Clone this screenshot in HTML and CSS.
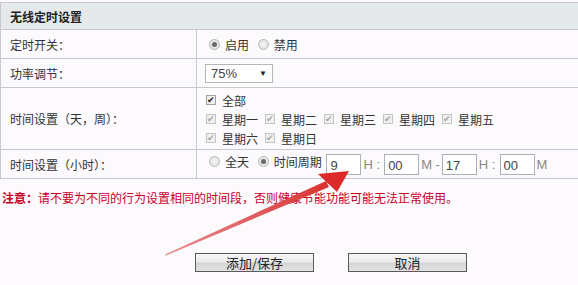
FILE: index.html
```html
<!DOCTYPE html>
<html lang="zh-CN">
<head>
    <meta charset="UTF-8">
    <title>无线定时设置</title>
    <link rel="stylesheet" href="styles.css">
</head>
<body>

<div class="page">
    <table class="settings">
        <tr class="head">
            <th colspan="2">无线定时设置</th>
        </tr>
        <tr class="row">
            <td class="label">定时开关：</td>
            <td class="value">
                <span class="opt"><span class="radio on"></span>启用</span>
                <span class="opt"><span class="radio"></span>禁用</span>
            </td>
        </tr>
        <tr class="row">
            <td class="label">功率调节：</td>
            <td class="value">
                <span class="select">75%<span class="caret">▼</span></span>
            </td>
        </tr>
        <tr class="row tall">
            <td class="label">时间设置（天，周）：</td>
            <td class="value days">
                <div class="line"><span class="day"><span class="check main">✔</span>全部</span></div>
                <div class="line">
                    <span class="day"><span class="check">✔</span>星期一</span>
                    <span class="day"><span class="check">✔</span>星期二</span>
                    <span class="day"><span class="check">✔</span>星期三</span>
                    <span class="day"><span class="check">✔</span>星期四</span>
                    <span class="day"><span class="check">✔</span>星期五</span>
                </div>
                <div class="line">
                    <span class="day"><span class="check">✔</span>星期六</span>
                    <span class="day"><span class="check">✔</span>星期日</span>
                </div>
            </td>
        </tr>
        <tr class="row">
            <td class="label">时间设置（小时）：</td>
            <td class="value">
                <span class="opt"><span class="radio"></span>全天</span>
                <span class="opt"><span class="radio on"></span>时间周期</span>
                <span class="box">9</span><span class="unit">H :</span>
                <span class="box">00</span><span class="unit">M -</span>
                <span class="box">17</span><span class="unit">H :</span>
                <span class="box">00</span><span class="unit">M</span>
            </td>
        </tr>
    </table>

    <p class="note"><b>注意：</b>请不要为不同的行为设置相同的时间段，否则健康节能功能可能无法正常使用。</p>

    <div class="actions">
        <button class="btn">添加/保存</button>
        <button class="btn">取消</button>
    </div>

    <!-- red annotation arrow drawn over the form -->
    <svg class="arrow" width="578" height="285" viewBox="0 0 578 285">
        <defs>
            <linearGradient id="shaft" x1="166" y1="256" x2="340" y2="176" gradientUnits="userSpaceOnUse">
                <stop offset="0" stop-color="#e89090"/>
                <stop offset="1" stop-color="#d82a2a"/>
            </linearGradient>
        </defs>
        <polygon points="165,256 166,254 326,181 329,187" fill="url(#shaft)"/>
        <polygon points="349,171 318,174 337,192" fill="#dc2a2a"/>
    </svg>
</div>

</body>
</html>
```

FILE: styles.css
```css
body {
    margin: 0;
    background: #fdfafd;
    font-family: "Noto Sans CJK SC", "Liberation Sans", sans-serif;
    font-size: 12px;
    color: #333;
    overflow: hidden;
}
.page {
    position: relative;
    width: 578px;
    height: 285px;
    padding-top: 2px;
    box-sizing: border-box;
}
.settings {
    width: 600px;
    border-collapse: collapse;
}
.settings th,
.settings td {
    border: 1px solid #c9c9cd;
    padding: 0;
}
.head th {
    height: 26px;
    background: #e6e9ec;
    text-align: left;
    padding-left: 9px;
    font-weight: bold;
    color: #222;
}
.row td {
    height: 28px;
}
.row.tall td {
    height: 60px;
}
.label {
    width: 186px;
    padding-left: 9px !important;
}
.value {
    padding-left: 12px !important;
    white-space: nowrap;
}
.opt {
    display: inline-flex;
    align-items: center;
    margin-right: 6px;
}
.radio {
    display: inline-block;
    width: 11px;
    height: 11px;
    border-radius: 50%;
    border: 1px solid #b8b8b8;
    background: radial-gradient(circle, #f4f4f4, #dcdcdc);
    box-sizing: border-box;
    margin-right: 5px;
    position: relative;
}
.radio.on::after {
    content: "";
    position: absolute;
    left: 2px;
    top: 2px;
    width: 5px;
    height: 5px;
    border-radius: 50%;
    background: #6a6a6a;
}
.select {
    display: inline-flex;
    align-items: center;
    justify-content: space-between;
    width: 68px;
    height: 19px;
    box-sizing: border-box;
    border: 1px solid #b5b5b5;
    background: #fff;
    padding: 0 5px 0 5px;
    margin-left: -4px;
    font-family: "Liberation Sans", sans-serif;
    font-size: 13px;
    color: #444;
}
.caret {
    font-size: 8px;
    color: #222;
}
.days {
    padding-top: 1px !important;
}
.line {
    height: 19px;
    display: flex;
    align-items: center;
}
.day {
    display: inline-flex;
    align-items: center;
    width: 59px;
}
.check {
    display: inline-block;
    width: 10px;
    height: 10px;
    border: 1px solid #c4c4c4;
    background: #f0f0f0;
    box-sizing: border-box;
    margin: 0 6px 0 -3px;
    font-size: 9px;
    line-height: 8px;
    text-align: center;
    color: #a8a8a8;
}
.check.main {
    color: #222;
    border-color: #a0a0a0;
}
.box {
    display: inline-block;
    width: 35px;
    height: 21px;
    line-height: 21px;
    box-sizing: border-box;
    border: 1px solid #aab0b8;
    background: #fff;
    padding-left: 3px;
    vertical-align: middle;
    font-family: "Liberation Sans", sans-serif;
    font-size: 13px;
    color: #444;
    margin-left: -4px;
}
.box:first-of-type {
    margin-left: -3px;
}
.unit {
    display: inline-block;
    width: 20px;
    padding-left: 2px;
    vertical-align: middle;
    font-family: "Liberation Sans", sans-serif;
    font-size: 13px;
    color: #888;
    margin-right: 2px;
}
.note {
    margin: 10px 0 0 2px;
    color: #c8001e;
    font-size: 12px;
}
.note b {
    font-weight: bold;
}
.actions {
    display: flex;
    gap: 34px;
    margin: 47px 0 0 195px;
}
.btn {
    width: 119px;
    height: 19px;
    padding: 0;
    border: 1px solid #5a5a5a;
    background: linear-gradient(#f6f6f6, #ececec 45%, #d6d6d6 55%, #e2e2e2);
    font-family: "Noto Sans CJK SC", sans-serif;
    font-size: 13px;
    line-height: 17px;
    color: #222;
}
.arrow {
    position: absolute;
    left: 0;
    top: 0;
    pointer-events: none;
}
```
